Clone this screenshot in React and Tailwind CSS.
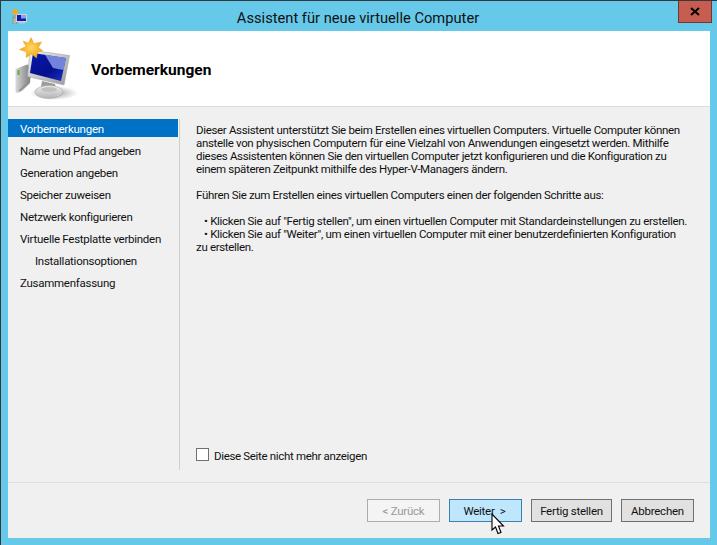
const font = { fontFamily: 'Roboto, "Noto Sans", sans-serif' };

function WizardIcon() {
  return (
    <svg width="72" height="72" viewBox="0 0 72 72">
      <defs>
        <linearGradient id="scr" x1="0" y1="0" x2="1" y2="1">
          <stop offset="0" stopColor="#0818a8" />
          <stop offset="0.6" stopColor="#04108e" />
          <stop offset="1" stopColor="#1c34c8" />
        </linearGradient>
        <linearGradient id="fr" x1="0" y1="0" x2="1" y2="1">
          <stop offset="0" stopColor="#f4f4f4" />
          <stop offset="1" stopColor="#9a9a9a" />
        </linearGradient>
        <linearGradient id="tw" x1="0" y1="0" x2="1" y2="0">
          <stop offset="0" stopColor="#dadada" />
          <stop offset="0.5" stopColor="#a8a8a8" />
          <stop offset="1" stopColor="#7c7c7c" />
        </linearGradient>
        <linearGradient id="ba" x1="0" y1="0" x2="0" y2="1">
          <stop offset="0" stopColor="#efefef" />
          <stop offset="1" stopColor="#b4b4b4" />
        </linearGradient>
        <radialGradient id="st" cx="0.5" cy="0.5" r="0.6">
          <stop offset="0" stopColor="#ffd860" />
          <stop offset="1" stopColor="#f19a10" />
        </radialGradient>
        <radialGradient id="sh" cx="0.5" cy="0.5" r="0.5">
          <stop offset="0" stopColor="#a0a0a0" />
          <stop offset="1" stopColor="#ffffff" />
        </radialGradient>
      </defs>
      <ellipse cx="46" cy="60" rx="24" ry="7" fill="url(#sh)" />
      <path d="M7.5 36 L19 31.5 L23 33 L22 50 L14 58 L9 60 L7.5 59 Z" fill="url(#tw)" />
      <rect x="9.5" y="37" width="2" height="5" fill="#5fae3c" />
      <path d="M11 58 L22 48" stroke="#8e8e8e" strokeWidth="1.5" />
      <path d="M34 48 L47 51 L48 56 L33 54 Z" fill="#9c9c9c" />
      <ellipse cx="41" cy="59" rx="14" ry="6.5" fill="url(#ba)" stroke="#a6a6a6" strokeWidth="0.6" />
      <ellipse cx="41" cy="56.5" rx="8" ry="2.5" fill="#c0c0c0" />
      <path d="M22 17 L61.5 22.5 L56 52 L19.5 43.5 Z" fill="url(#fr)" stroke="#9c9c9c" strokeWidth="0.5" />
      <path d="M25 20 L58 25 L53 48 L22 40 Z" fill="url(#scr)" />
      <path d="M37 21.8 L58 25 L55.5 37 L45 35 Z" fill="#8fa0ee" opacity="0.8" />
      <path d="M23 4.5 L26 10.5 L33.5 9 L30.5 14.5 L35 18 L29.5 19 L28.5 25 L23.5 21 L18 24.5 L18.5 19 L11.5 16.5 L18 13.5 L15 8 L20.5 10 Z" fill="url(#st)" stroke="#eea522" strokeWidth="0.5" />
    </svg>
  );
}

function TitleIcon() {
  return (
    <svg width="16" height="16" viewBox="0 0 16 16">
      <rect x="2" y="8" width="3.5" height="8" fill="#b8b8b8" stroke="#777" strokeWidth="0.5" />
      <rect x="2.8" y="9" width="1.5" height="1.5" fill="#5fae3c" />
      <rect x="5" y="6" width="11" height="8" fill="#d4d4d4" />
      <rect x="6" y="7" width="9" height="6" fill="#0a1fae" />
      <rect x="10" y="7" width="5" height="3.5" fill="#8f9fee" />
      <rect x="8" y="14" width="6" height="1.5" fill="#c6c6c6" />
      <path d="M4 0 L5 2 L7.5 1.5 L6.5 3.5 L8 5 L6 5.5 L5.5 7.5 L4 6 L2 7.5 L2.3 5.5 L0 4.5 L2 3.3 L1 1.3 L3 2 Z" fill="#f3a922" />
    </svg>
  );
}

const items = [
  ["Vorbemerkungen", true, false],
  ["Name und Pfad angeben", false, false],
  ["Generation angeben", false, false],
  ["Speicher zuweisen", false, false],
  ["Netzwerk konfigurieren", false, false],
  ["Virtuelle Festplatte verbinden", false, false],
  ["Installationsoptionen", false, true],
  ["Zusammenfassung", false, false],
];

function Btn({ children, cls }) {
  return (
    <div className={"flex items-center justify-center h-[23px] border pt-[2px] text-[11.5px] tracking-[-0.25px] " + cls}>{children}</div>
  );
}

export default function App() {
  return (
    <div style={font} className="w-[717px] h-[545px] bg-[#66c9ea] border-t border-l border-[#333a3f] flex flex-col overflow-hidden text-[#111] relative">
      <div className="h-[30px] flex items-start shrink-0">
        <div className="w-[10px] mt-[7px] shrink-0" />
        <div className="w-[16px] mt-[7px] shrink-0"><TitleIcon /></div>
        <div className="flex-1 text-center text-[14.7px] leading-[20px] pt-[7px] pl-[11px] text-[#111]">Assistent für neue virtuelle Computer</div>
        <div className="w-[34px] h-[22px] mr-[5px] bg-[#c75c50] border border-[#6b3a33] border-t-0 flex items-center justify-center shrink-0">
          <svg width="10" height="9" viewBox="0 0 10 9"><path d="M1 1 L9 8 M9 1 L1 8" stroke="#000" strokeWidth="2" /></svg>
        </div>
      </div>

      <div className="ml-[7px] w-[702px] h-[507px] bg-[#f0f0f0] flex flex-col shrink-0">
        <div className="h-[76px] bg-white border-b border-[#dcdcdc] flex items-center shrink-0">
          <div className="w-[72px] h-[72px] mt-[1px] shrink-0"><WizardIcon /></div>
          <div className="ml-[11px] text-[15.5px] font-bold text-black leading-[20px] mt-[3px]">Vorbemerkungen</div>
        </div>

        <div className="flex h-[375px] pt-[12px] shrink-0">
          <div className="w-[172px] h-[351px] border-r border-[#cfcfcf] shrink-0 flex flex-col gap-[4px] pr-[1px]">
            {items.map(([t, active, indent]) => (
              <div key={t} className={"h-[18px] text-[11.5px] leading-[21px] tracking-[-0.27px] whitespace-nowrap " + (active ? "bg-[#0072c6] text-white " : "") + (indent ? "pl-[27px]" : "pl-[12px]")}>{t}</div>
            ))}
          </div>
          <div className="flex-1 pl-[16px] flex flex-col h-[351px]">
            <div className="text-[11.5px] leading-[13px] whitespace-nowrap pt-[5px] tracking-[-0.33px]">
              <div>Dieser Assistent unterstützt Sie beim Erstellen eines virtuellen Computers. Virtuelle Computer können</div>
              <div>anstelle von physischen Computern für eine Vielzahl von Anwendungen eingesetzt werden. Mithilfe</div>
              <div>dieses Assistenten können Sie den virtuellen Computer jetzt konfigurieren und die Konfiguration zu</div>
              <div>einem späteren Zeitpunkt mithilfe des Hyper-V-Managers ändern.</div>
              <div className="mt-[13px]">Führen Sie zum Erstellen eines virtuellen Computers einen der folgenden Schritte aus:</div>
              <div className="mt-[13px] pl-[8px] tracking-[-0.3px]">• Klicken Sie auf "Fertig stellen", um einen virtuellen Computer mit Standardeinstellungen zu erstellen.</div>
              <div className="pl-[8px] tracking-[-0.3px]">• Klicken Sie auf "Weiter", um einen virtuellen Computer mit einer benutzerdefinierten Konfiguration</div>
              <div>zu erstellen.</div>
            </div>
            <div className="mt-auto flex items-center gap-[5px] mb-[7px]">
              <div className="w-[13px] h-[13px] bg-white border border-[#707070] shrink-0" />
              <div className="text-[11.5px] leading-[14px] tracking-[-0.33px] pt-[3px]">Diese Seite nicht mehr anzeigen</div>
            </div>
          </div>
        </div>

        <div className="flex-1 border-t border-[#dfdfdf] flex items-start justify-end gap-[9px] pt-[16px] pr-[16px]">
          <Btn cls="w-[73px] bg-[#f4f4f4] border-[#adadad] text-[#9a9a9a]">&lt; Zurück</Btn>
          <Btn cls="w-[73px] bg-[#bee6fd] border-[#3c7fb1] text-[#111] pr-[2px]">Weiter &nbsp;&gt;</Btn>
          <Btn cls="w-[81px] bg-[#e1e1e1] border-[#707070] text-[#111]">Fertig stellen</Btn>
          <Btn cls="w-[73px] bg-[#e1e1e1] border-[#707070] text-[#111]">Abbrechen</Btn>
        </div>
      </div>

      <svg className="absolute left-[490px] top-[512px]" width="14" height="22" viewBox="0 0 14 22">
        <path d="M1 1 L1 17 L4.5 14 L7 20.5 L10 19.5 L7.5 13 L12.5 13 Z" fill="#fff" stroke="#000" strokeWidth="1.1" />
      </svg>
    </div>
  );
}
